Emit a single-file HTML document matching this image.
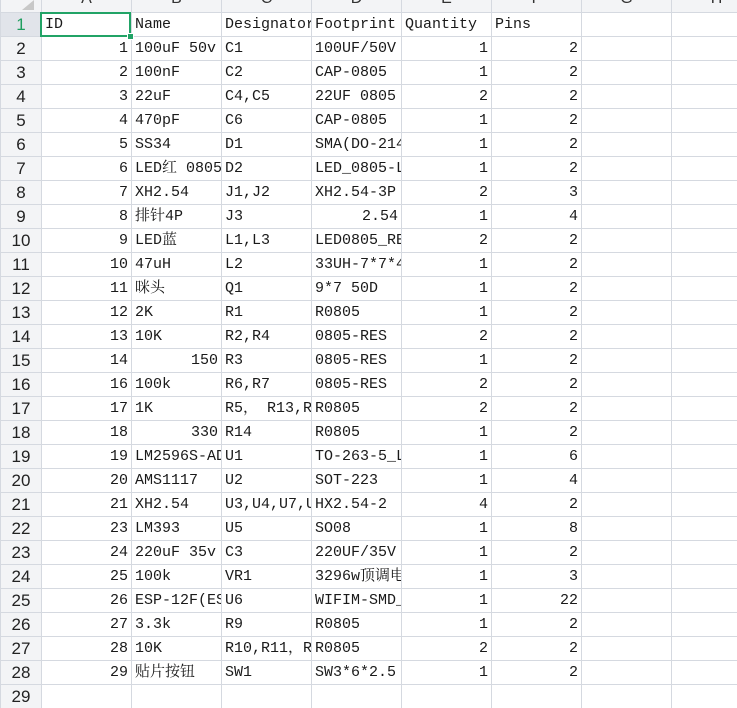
<!DOCTYPE html>
<html><head><meta charset="utf-8">
<style>
html,body{margin:0;padding:0;background:#fff;overflow:hidden;width:737px;height:708px;}
#wrap{position:relative;width:737px;height:708px;overflow:hidden;}
table{position:absolute;left:0;top:-12px;border-collapse:collapse;table-layout:fixed;width:761px;}
td{height:23px;border:1px solid #d5d9e0;padding:0 3px;white-space:nowrap;overflow:hidden;
 font-family:"Liberation Mono","Noto Serif CJK SC",monospace;font-size:15px;color:#1a1a1a;line-height:23px;text-overflow:clip;}
td.n{text-align:right;}
tr.h td{background:#f3f4f6;font-family:"Liberation Sans",sans-serif;font-size:16px;color:#333;text-align:center;line-height:20px;vertical-align:top;}
td.rh{background:#f3f4f6;font-family:"Liberation Sans",sans-serif;font-size:17px;color:#222;text-align:center;padding:0;}
td.sel{background:#e1e4ea;}
td.selg{background:#e1e4ea;color:#1e9e5e;}
#box{position:absolute;left:40px;top:12px;width:87px;height:21px;border:2px solid #21a366;}
#dot{position:absolute;left:127px;top:33px;width:5px;height:5px;background:#21a366;border:1px solid #fff;}
#tri{position:absolute;left:22px;top:0;width:0;height:0;border-left:12px solid transparent;border-bottom:10px solid #c8c8c8;}
</style></head><body><div id="wrap">
<table>
<colgroup><col style="width:41px"><col style="width:90px"><col style="width:90px"><col style="width:90px"><col style="width:90px"><col style="width:90px"><col style="width:90px"><col style="width:90px"><col style="width:90px"></colgroup>
<tr class="h"><td class="rh" style="font-size:16px"></td><td class="sel">A</td><td>B</td><td>C</td><td>D</td><td>E</td><td>F</td><td>G</td><td>H</td></tr>
<tr><td class="rh selg">1</td><td>ID</td><td>Name</td><td>Designator</td><td>Footprint</td><td>Quantity</td><td>Pins</td><td></td><td></td></tr>
<tr><td class="rh">2</td><td class="n">1</td><td>100uF 50v</td><td>C1</td><td>100UF/50V</td><td class="n">1</td><td class="n">2</td><td></td><td></td></tr>
<tr><td class="rh">3</td><td class="n">2</td><td>100nF</td><td>C2</td><td>CAP-0805</td><td class="n">1</td><td class="n">2</td><td></td><td></td></tr>
<tr><td class="rh">4</td><td class="n">3</td><td>22uF</td><td>C4,C5</td><td>22UF 0805</td><td class="n">2</td><td class="n">2</td><td></td><td></td></tr>
<tr><td class="rh">5</td><td class="n">4</td><td>470pF</td><td>C6</td><td>CAP-0805</td><td class="n">1</td><td class="n">2</td><td></td><td></td></tr>
<tr><td class="rh">6</td><td class="n">5</td><td>SS34</td><td>D1</td><td>SMA(DO-214AC)</td><td class="n">1</td><td class="n">2</td><td></td><td></td></tr>
<tr><td class="rh">7</td><td class="n">6</td><td>LED红 0805</td><td>D2</td><td>LED_0805-LED</td><td class="n">1</td><td class="n">2</td><td></td><td></td></tr>
<tr><td class="rh">8</td><td class="n">7</td><td>XH2.54</td><td>J1,J2</td><td>XH2.54-3P</td><td class="n">2</td><td class="n">3</td><td></td><td></td></tr>
<tr><td class="rh">9</td><td class="n">8</td><td>排针4P</td><td>J3</td><td class="n">2.54</td><td class="n">1</td><td class="n">4</td><td></td><td></td></tr>
<tr><td class="rh">10</td><td class="n">9</td><td>LED蓝</td><td>L1,L3</td><td>LED0805_RED</td><td class="n">2</td><td class="n">2</td><td></td><td></td></tr>
<tr><td class="rh">11</td><td class="n">10</td><td>47uH</td><td>L2</td><td>33UH-7*7*4</td><td class="n">1</td><td class="n">2</td><td></td><td></td></tr>
<tr><td class="rh">12</td><td class="n">11</td><td>咪头</td><td>Q1</td><td>9*7 50D</td><td class="n">1</td><td class="n">2</td><td></td><td></td></tr>
<tr><td class="rh">13</td><td class="n">12</td><td>2K</td><td>R1</td><td>R0805</td><td class="n">1</td><td class="n">2</td><td></td><td></td></tr>
<tr><td class="rh">14</td><td class="n">13</td><td>10K</td><td>R2,R4</td><td>0805-RES</td><td class="n">2</td><td class="n">2</td><td></td><td></td></tr>
<tr><td class="rh">15</td><td class="n">14</td><td class="n">150</td><td>R3</td><td>0805-RES</td><td class="n">1</td><td class="n">2</td><td></td><td></td></tr>
<tr><td class="rh">16</td><td class="n">16</td><td>100k</td><td>R6,R7</td><td>0805-RES</td><td class="n">2</td><td class="n">2</td><td></td><td></td></tr>
<tr><td class="rh">17</td><td class="n">17</td><td>1K</td><td>R5， R13,R8</td><td>R0805</td><td class="n">2</td><td class="n">2</td><td></td><td></td></tr>
<tr><td class="rh">18</td><td class="n">18</td><td class="n">330</td><td>R14</td><td>R0805</td><td class="n">1</td><td class="n">2</td><td></td><td></td></tr>
<tr><td class="rh">19</td><td class="n">19</td><td>LM2596S-ADJ</td><td>U1</td><td>TO-263-5_L</td><td class="n">1</td><td class="n">6</td><td></td><td></td></tr>
<tr><td class="rh">20</td><td class="n">20</td><td>AMS1117</td><td>U2</td><td>SOT-223</td><td class="n">1</td><td class="n">4</td><td></td><td></td></tr>
<tr><td class="rh">21</td><td class="n">21</td><td>XH2.54</td><td>U3,U4,U7,U8</td><td>HX2.54-2</td><td class="n">4</td><td class="n">2</td><td></td><td></td></tr>
<tr><td class="rh">22</td><td class="n">23</td><td>LM393</td><td>U5</td><td>SO08</td><td class="n">1</td><td class="n">8</td><td></td><td></td></tr>
<tr><td class="rh">23</td><td class="n">24</td><td>220uF 35v</td><td>C3</td><td>220UF/35V</td><td class="n">1</td><td class="n">2</td><td></td><td></td></tr>
<tr><td class="rh">24</td><td class="n">25</td><td>100k</td><td>VR1</td><td>3296w顶调电位器</td><td class="n">1</td><td class="n">3</td><td></td><td></td></tr>
<tr><td class="rh">25</td><td class="n">26</td><td>ESP-12F(ESP8266)</td><td>U6</td><td>WIFIM-SMD_</td><td class="n">1</td><td class="n">22</td><td></td><td></td></tr>
<tr><td class="rh">26</td><td class="n">27</td><td>3.3k</td><td>R9</td><td>R0805</td><td class="n">1</td><td class="n">2</td><td></td><td></td></tr>
<tr><td class="rh">27</td><td class="n">28</td><td>10K</td><td>R10,R11，R12</td><td>R0805</td><td class="n">2</td><td class="n">2</td><td></td><td></td></tr>
<tr><td class="rh">28</td><td class="n">29</td><td>贴片按钮</td><td>SW1</td><td>SW3*6*2.5</td><td class="n">1</td><td class="n">2</td><td></td><td></td></tr>
<tr><td class="rh">29</td><td></td><td></td><td></td><td></td><td></td><td></td><td></td><td></td></tr>
</table>
<div id="tri"></div>
<div id="box"></div><div id="dot"></div>
</div></body></html>
